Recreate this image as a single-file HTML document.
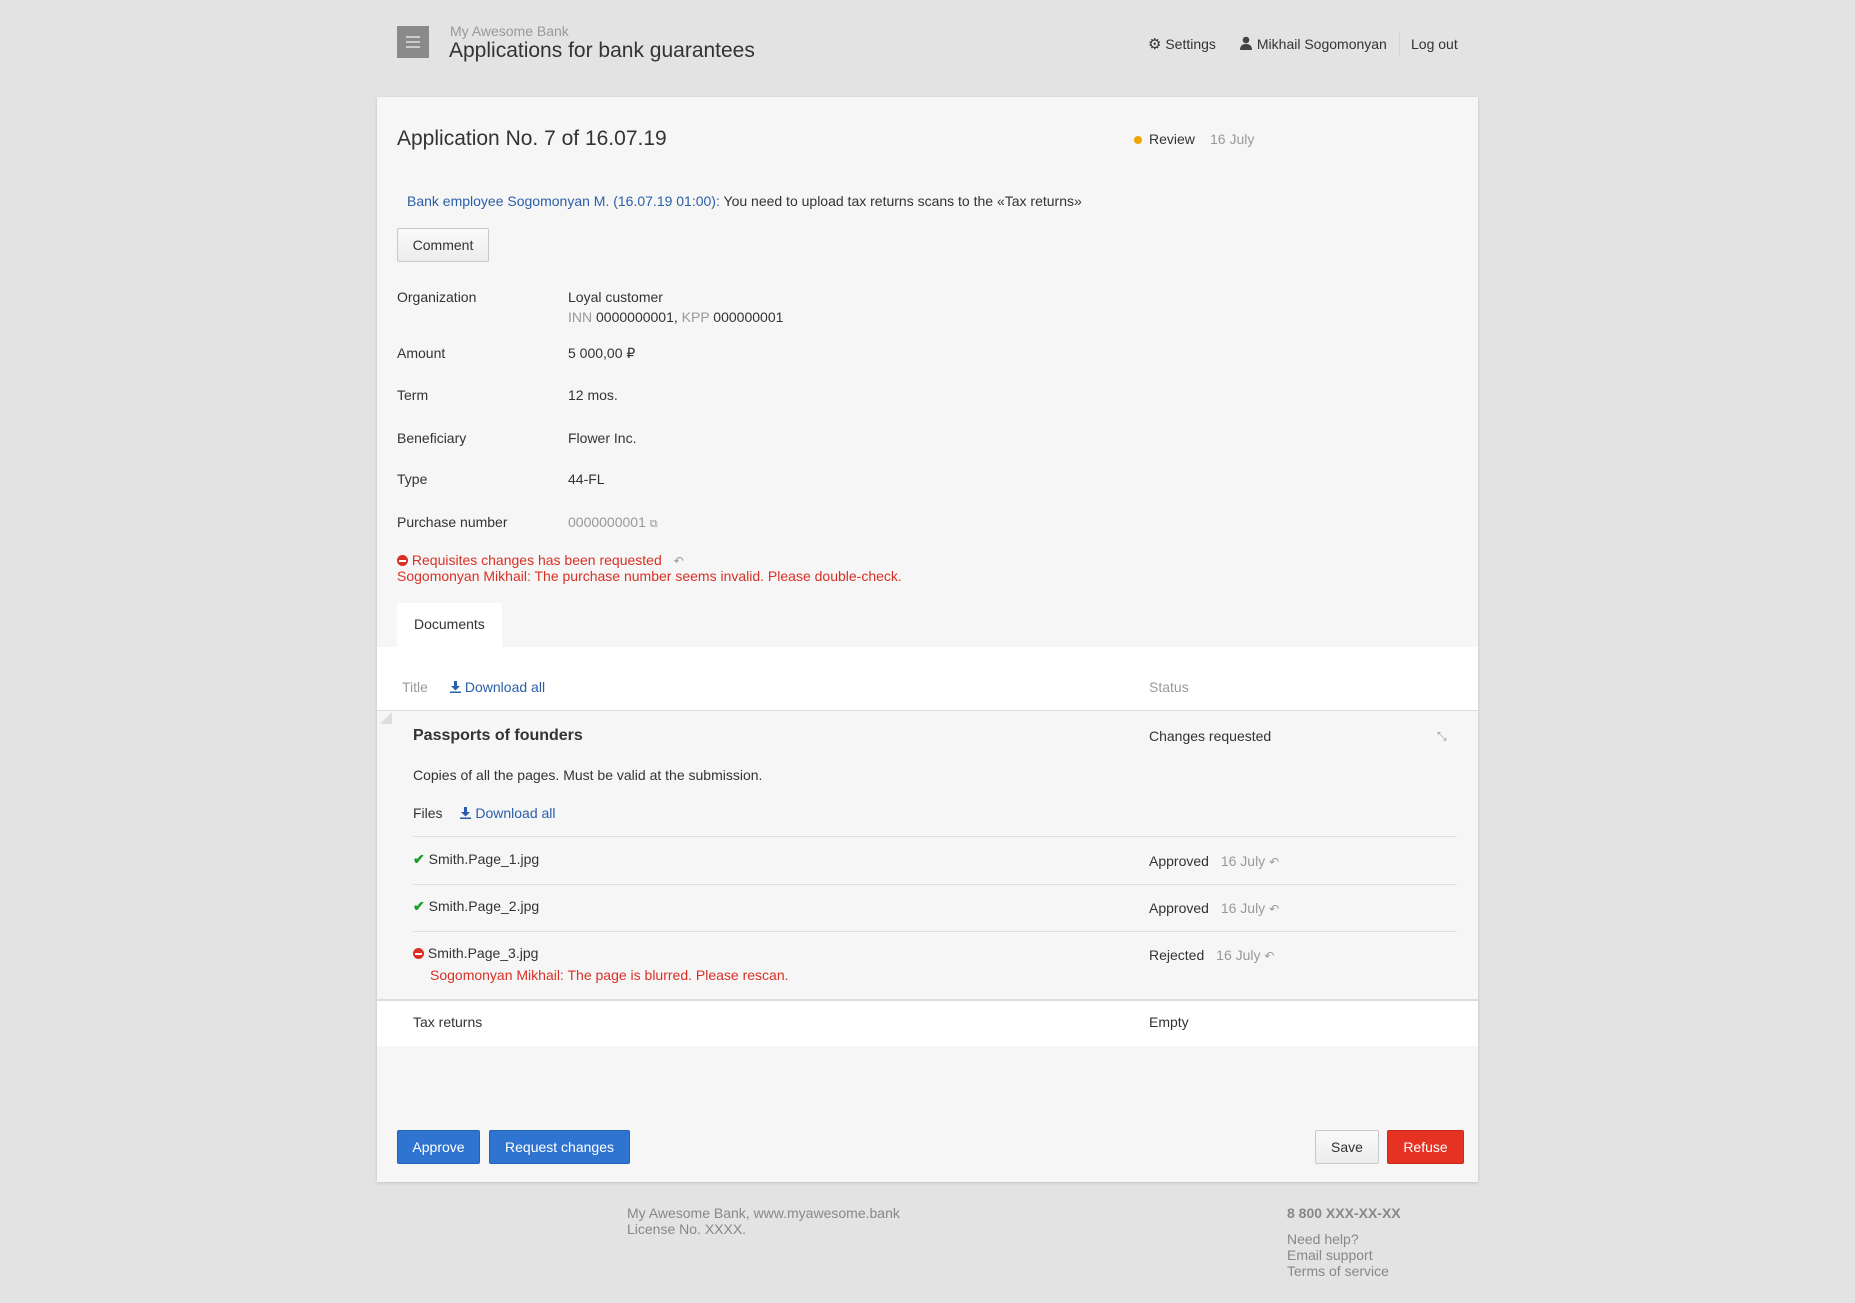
<!DOCTYPE html>
<html><head><meta charset="utf-8"><style>
*{box-sizing:border-box;margin:0;padding:0}
body{width:1855px;height:1303px;background:#e3e3e3;font-family:"Liberation Sans",Arial,sans-serif;font-size:14px;color:#333;position:relative;overflow:hidden}
.a{position:absolute;white-space:nowrap;line-height:17px}
.card{position:absolute;left:377px;top:97px;width:1101px;height:1085px;background:#f6f6f6;box-shadow:0 1px 3px rgba(0,0,0,.15)}
.gray{color:#999}.blue{color:#2a5fa8}.red{color:#d93025}
.btn{position:absolute;height:34px;line-height:32px;text-align:center;border-radius:2px;font-size:14px}
.sep{position:absolute;height:1px;background:#e0e0e0}
</style></head><body>
<div style="position:absolute;left:397px;top:26px;width:32px;height:32px;background:#8a8a8a">
 <div style="position:absolute;left:9px;top:10px;width:14px;height:2px;background:#ccc"></div>
 <div style="position:absolute;left:9px;top:15px;width:14px;height:2px;background:#ccc"></div>
 <div style="position:absolute;left:9px;top:20px;width:14px;height:2px;background:#ccc"></div>
</div>
<div class="a gray" style="left:450px;top:23px;font-size:14px">My Awesome Bank</div>
<div class="a" style="left:449px;top:39px;font-size:21px;line-height:24px">Applications for bank guarantees</div>
<div class="a" style="left:1148px;top:36px"><span style="font-size:15px">⚙</span> Settings</div>
<div class="a" style="left:1239px;top:36px"><svg width="14" height="14" viewBox="0 0 14 14" style="vertical-align:-1px"><circle cx="7" cy="4" r="3.3" fill="#444"/><path d="M1 14 Q1 8 7 8 Q13 8 13 14Z" fill="#444"/></svg> Mikhail Sogomonyan</div>
<div style="position:absolute;left:1399px;top:32px;width:1px;height:24px;background:#d3d3d3"></div>
<div class="a" style="left:1411px;top:36px">Log out</div>

<div class="card"></div>
<div class="a" style="left:397px;top:127px;font-size:21px;line-height:24px">Application No. 7 of 16.07.19</div>
<div style="position:absolute;left:1134px;top:136px;width:8px;height:8px;border-radius:50%;background:#f0a500"></div>
<div class="a" style="left:1149px;top:131px">Review</div>
<div class="a gray" style="left:1210px;top:131px">16 July</div>
<div class="a" style="left:407px;top:193px"><span class="blue">Bank employee Sogomonyan M. (16.07.19 01:00):</span> You need to upload tax returns scans to the «Tax returns»</div>
<div class="btn" style="left:397px;top:228px;width:92px;background:linear-gradient(#fafafa,#ececec);border:1px solid #c8c8c8;color:#333">Comment</div>

<div class="a" style="left:397px;top:289px">Organization</div>
<div class="a" style="left:568px;top:289px">Loyal customer</div>
<div class="a" style="left:568px;top:309px"><span class="gray">INN</span> 0000000001, <span class="gray">KPP</span> 000000001</div>
<div class="a" style="left:397px;top:345px">Amount</div><div class="a" style="left:568px;top:345px">5 000,00 ₽</div>
<div class="a" style="left:397px;top:387px">Term</div><div class="a" style="left:568px;top:387px">12 mos.</div>
<div class="a" style="left:397px;top:430px">Beneficiary</div><div class="a" style="left:568px;top:430px">Flower Inc.</div>
<div class="a" style="left:397px;top:471px">Type</div><div class="a" style="left:568px;top:471px">44-FL</div>
<div class="a" style="left:397px;top:514px">Purchase number</div><div class="a gray" style="left:568px;top:514px">0000000001 <span style="font-size:11px">⧉</span></div>
<div class="a red" style="left:397px;top:552px"><span style="display:inline-block;width:11px;height:11px;border-radius:50%;background:#d93025;vertical-align:-1px;position:relative"><span style="position:absolute;left:2px;top:4.5px;width:7px;height:2px;background:#fff"></span></span> Requisites changes has been requested <span class="gray" style="font-size:12px;margin-left:8px">↶</span></div>
<div class="a red" style="left:397px;top:568px">Sogomonyan Mikhail: The purchase number seems invalid. Please double-check.</div>

<div style="position:absolute;left:397px;top:603px;width:105px;height:45px;background:#fff"></div>
<div class="a" style="left:414px;top:616px">Documents</div>
<div style="position:absolute;left:377px;top:647px;width:1101px;height:64px;background:#fff;border-bottom:1px solid #ddd"></div>
<div class="a gray" style="left:402px;top:679px">Title</div>
<div class="a blue" style="left:450px;top:679px"><svg width="11" height="12" viewBox="0 0 11 12" style="vertical-align:-1px"><path d="M4 0h3v5h3L5.5 9.5 1 5h3z M0 10.5h11V12H0z" fill="#2a5fa8"/></svg> Download all</div>
<div class="a gray" style="left:1149px;top:679px">Status</div>
<div style="position:absolute;left:380px;top:712px;width:0;height:0;border-left:12px solid transparent;border-bottom:12px solid #ddd"></div>

<div class="a" style="left:413px;top:727px;font-size:16px;font-weight:bold">Passports of founders</div>
<div class="a" style="left:1149px;top:728px">Changes requested</div>
<div class="a gray" style="left:1437px;top:728px;font-size:12px">⤡</div>
<div class="a" style="left:413px;top:767px">Copies of all the pages. Must be valid at the submission.</div>
<div class="a" style="left:413px;top:805px">Files <span class="blue" style="margin-left:14px"><svg width="11" height="12" viewBox="0 0 11 12" style="vertical-align:-1px"><path d="M4 0h3v5h3L5.5 9.5 1 5h3z M0 10.5h11V12H0z" fill="#2a5fa8"/></svg> Download all</span></div>
<div class="sep" style="left:413px;top:836px;width:1044px"></div>
<div class="a" style="left:413px;top:851px"><span style="color:#1a9e2c;font-weight:bold">✔</span> Smith.Page_1.jpg</div>
<div class="a" style="left:1149px;top:853px">Approved <span class="gray" style="margin-left:8px">16 July</span> <span class="gray" style="font-size:12px">↶</span></div>
<div class="sep" style="left:413px;top:884px;width:1044px"></div>
<div class="a" style="left:413px;top:898px"><span style="color:#1a9e2c;font-weight:bold">✔</span> Smith.Page_2.jpg</div>
<div class="a" style="left:1149px;top:900px">Approved <span class="gray" style="margin-left:8px">16 July</span> <span class="gray" style="font-size:12px">↶</span></div>
<div class="sep" style="left:413px;top:931px;width:1044px"></div>
<div class="a" style="left:413px;top:945px"><span style="display:inline-block;width:11px;height:11px;border-radius:50%;background:#d93025;vertical-align:-1px;position:relative"><span style="position:absolute;left:2px;top:4.5px;width:7px;height:2px;background:#fff"></span></span> Smith.Page_3.jpg</div>
<div class="a" style="left:1149px;top:947px">Rejected <span class="gray" style="margin-left:8px">16 July</span> <span class="gray" style="font-size:12px">↶</span></div>
<div class="a red" style="left:430px;top:967px">Sogomonyan Mikhail: The page is blurred. Please rescan.</div>
<div style="position:absolute;left:377px;top:999px;width:1101px;height:47px;background:#fff;border-top:2px solid #ddd"></div>
<div class="a" style="left:413px;top:1014px">Tax returns</div>
<div class="a" style="left:1149px;top:1014px">Empty</div>

<div class="btn" style="left:397px;top:1130px;width:83px;background:#2f74d0;border:1px solid #2562b5;color:#fff">Approve</div>
<div class="btn" style="left:489px;top:1130px;width:141px;background:#2f74d0;border:1px solid #2562b5;color:#fff">Request changes</div>
<div class="btn" style="left:1315px;top:1130px;width:64px;background:linear-gradient(#fafafa,#ececec);border:1px solid #c8c8c8">Save</div>
<div class="btn" style="left:1387px;top:1130px;width:77px;background:#e53222;border:1px solid #c92a1c;color:#fff">Refuse</div>

<div class="a" style="left:627px;top:1205px;color:#888;line-height:16px">My Awesome Bank, www.myawesome.bank<br>License No. XXXX.</div>
<div class="a" style="left:1287px;top:1205px;color:#888;font-weight:bold">8 800 XXX-XX-XX</div>
<div class="a" style="left:1287px;top:1231px;color:#888;line-height:16px">Need help?<br>Email support<br>Terms of service</div>
</body></html>
